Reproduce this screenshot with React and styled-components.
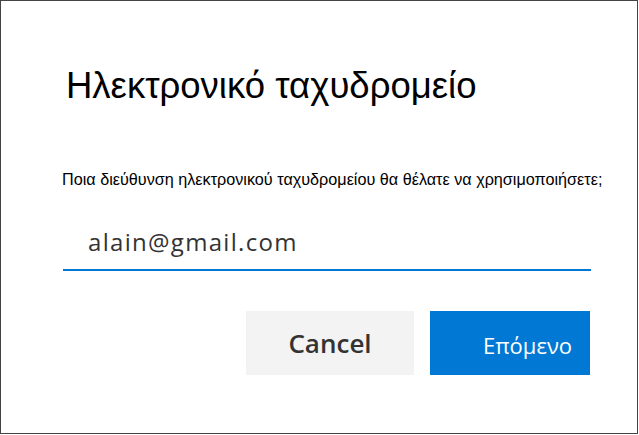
import styled, { createGlobalStyle } from "styled-components";

const GlobalStyle = createGlobalStyle`
  html, body {
    margin: 0;
    padding: 0;
    background: #ffffff;
  }
`;

const Dialog = styled.div`
  box-sizing: border-box;
  width: 638px;
  height: 434px;
  border: 1px solid #444444;
  background: #ffffff;
  display: flex;
  flex-direction: column;
  padding: 0 47px 0 61px;
`;

const Title = styled.h1`
  margin: 67px 0 0 4px;
  font-family: "Liberation Sans", Arial, sans-serif;
  font-weight: 400;
  font-size: 36.5px;
  line-height: 1;
  color: #000000;
`;

const Prompt = styled.p`
  margin: 66px 0 0 0;
  font-family: "Liberation Sans", Arial, sans-serif;
  font-size: 16.2px;
  line-height: 1;
  white-space: nowrap;
  color: #000000;
`;

const EmailInput = styled.input`
  box-sizing: border-box;
  margin-top: 34px;
  margin-left: 1px;
  width: 528px;
  height: 50px;
  padding: 0 0 6px 25px;
  border: none;
  border-bottom: 2px solid #0078d4;
  outline: none;
  background: transparent;
  font-family: "Open Sans", "Noto Sans", sans-serif;
  font-size: 24px;
  letter-spacing: 1.3px;
  color: #333333;
`;

const Actions = styled.div`
  display: flex;
  justify-content: flex-end;
  gap: 16px;
  margin-top: 40px;
`;

const Button = styled.button`
  box-sizing: border-box;
  height: 64px;
  width: ${(p) => p.$width}px;
  border: none;
  padding: ${(p) => (p.$primary ? "4px 0 0 53px" : "0")};
  text-align: ${(p) => (p.$primary ? "left" : "center")};
  background: ${(p) => (p.$primary ? "#0078d4" : "#f3f3f3")};
  color: ${(p) => (p.$primary ? "#ffffff" : "#333333")};
  font-family: "Open Sans", "Noto Sans", sans-serif;
  font-weight: ${(p) => (p.$primary ? 400 : 600)};
  font-size: ${(p) => (p.$primary ? 22 : 26)}px;
  cursor: pointer;
`;

export default function App() {
  return (
    <>
      <GlobalStyle />
      <Dialog>
        <Title>Ηλεκτρονικό ταχυδρομείο</Title>
        <Prompt>
          Ποια διεύθυνση ηλεκτρονικού ταχυδρομείου θα θέλατε να χρησιμοποιήσετε;
        </Prompt>
        <EmailInput type="email" defaultValue="alain@gmail.com" />
        <Actions>
          <Button $width={168}>Cancel</Button>
          <Button $width={160} $primary>
            Επόμενο
          </Button>
        </Actions>
      </Dialog>
    </>
  );
}
